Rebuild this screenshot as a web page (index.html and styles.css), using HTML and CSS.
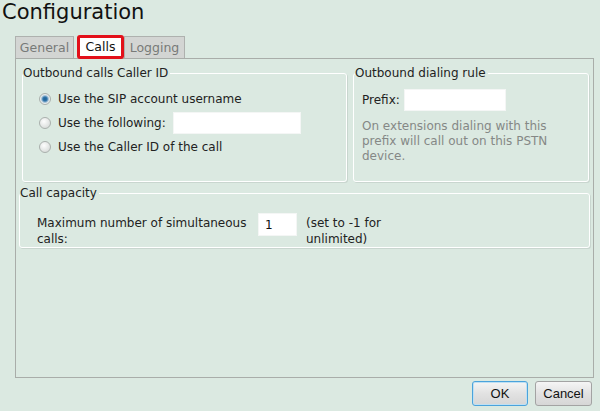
FILE: index.html
```html
<!DOCTYPE html>
<html lang="en">
<head>
    <meta charset="UTF-8">
    <meta name="viewport" content="width=device-width, initial-scale=1.0">
    <title>Configuration</title>
    <link rel="stylesheet" href="styles.css">
</head>
<body>
    <h1 class="title">Configuration</h1>

    <div class="tabs">
        <span class="tab tab-general">General</span>
        <span class="tab tab-active">Calls</span>
        <span class="tab tab-logging">Logging</span>
    </div>

    <div class="panel">
        <div class="panel-row">
            <fieldset class="group group-callerid">
                <legend>Outbound calls Caller ID</legend>
                <div class="group-body callerid-body">
                    <label class="option"><input type="radio" class="radio" name="cid" checked><span>Use the SIP account username</span></label>
                    <label class="option"><input type="radio" class="radio" name="cid"><span>Use the following:</span><input type="text" class="field field-cid"></label>
                    <label class="option"><input type="radio" class="radio" name="cid"><span>Use the Caller ID of the call</span></label>
                </div>
            </fieldset>

            <fieldset class="group group-dial">
                <legend>Outbound dialing rule</legend>
                <div class="group-body dial-body">
                    <div class="prefix-row">
                        <span>Prefix:</span>
                        <input type="text" class="field field-prefix">
                    </div>
                    <p class="hint">On extensions dialing with this prefix will call out on this PSTN device.</p>
                </div>
            </fieldset>
        </div>

        <fieldset class="group group-capacity">
            <legend>Call capacity</legend>
            <div class="group-body capacity-body">
                <span class="capacity-label">Maximum number of simultaneous calls:</span>
                <input type="text" class="field field-capacity" value="1">
                <span class="capacity-note">(set to -1 for unlimited)</span>
            </div>
        </fieldset>
    </div>

    <div class="buttons">
        <button class="btn btn-default">OK</button>
        <button class="btn">Cancel</button>
    </div>
</body>
</html>
```

FILE: styles.css
```css
body {
    font-family: 'DejaVu Sans', Verdana, sans-serif;
    font-size: 12px;
    margin: 0;
    padding: 0;
    background-color: #dbe9e1;
    color: #222;
}
.title {
    margin: 0;
    padding-left: 2px;
    font-size: 21px;
    font-weight: normal;
    line-height: 25px;
    color: #111;
}
.tabs {
    display: flex;
    align-items: flex-end;
    margin-top: 10px;
    padding-left: 15px;
    font-size: 12.5px;
}
.tab {
    box-sizing: border-box;
    height: 22px;
    line-height: 21px;
    text-align: center;
    background: #d3d5d3;
    border: 1px solid #aeb1ae;
    border-bottom: 0;
    color: #787a78;
}
.tab-general {
    width: 59px;
}
.tab-logging {
    width: 61px;
}
.tab-active {
    position: relative;
    width: 47px;
    height: 24px;
    line-height: 18px;
    margin: 0 0 -1px 3px;
    background: #fff;
    border: 3px solid #e3101a;
    border-radius: 3px;
    color: #111;
}
.tab-logging {
    margin-left: 0;
}
.panel {
    box-sizing: border-box;
    height: 320px;
    margin-left: 15px;
    width: 579px;
    padding: 7px 4px 0 6px;
    border: 1px solid #a9ada9;
    background: #dbe9e1;
}
.panel-row {
    display: flex;
    gap: 6px;
}
.group {
    margin: 0;
    padding: 0;
    min-width: 0;
    border: 1px solid #fff;
    border-radius: 3px;
    box-shadow: 1px 1px 0 #c9d6cf;
}
.group legend {
    padding: 0 2px 0 0;
    line-height: 15px;
    color: #222;
}
.group-callerid {
    box-sizing: border-box;
    width: 325px;
}
.group-dial {
    flex: 1;
}
.group-dial legend {
    margin-left: 1px;
}
.callerid-body {
    padding: 6px 0 0 16px;
}
.option {
    display: flex;
    align-items: center;
    gap: 7px;
    height: 24px;
}
.radio {
    appearance: none;
    -webkit-appearance: none;
    box-sizing: border-box;
    width: 12px;
    height: 12px;
    margin: 0;
    border: 1px solid #aab0ad;
    border-radius: 50%;
    background: radial-gradient(circle at 40% 35%, #fdfdfd, #cfd4d1);
}
.radio:checked {
    background: radial-gradient(circle, #1f5f93 0, #2f74aa 2px, #a9c4d8 3.5px, #e9eeee 4.5px, #cdd3d0 100%);
}
.field {
    box-sizing: border-box;
    height: 22px;
    margin: 0;
    padding: 0 6px;
    border: 1px solid #f4f6f5;
    background: #fff;
    font: inherit;
    color: #111;
    outline: none;
}
.field-cid {
    width: 128px;
}
.dial-body {
    padding: 8px 15px 17px 8px;
}
.prefix-row {
    display: flex;
    align-items: center;
    gap: 4px;
}
.field-prefix {
    width: 102px;
}
.hint {
    margin: 8px 0 0;
    line-height: 15px;
    color: #858886;
}
.group-capacity {
    margin: 4px -1px 0 -3px;
}
.capacity-body {
    display: flex;
    align-items: flex-start;
    padding: 12px 0 0 17px;
}
.capacity-label,
.capacity-note {
    margin-top: 2px;
    line-height: 16px;
}
.capacity-label {
    width: 213px;
}
.field-capacity {
    width: 39px;
    height: 23px;
    margin-left: 8px;
}
.capacity-note {
    width: 110px;
    margin-left: 9px;
}
.buttons {
    display: flex;
    justify-content: flex-end;
    gap: 7px;
    padding: 3px 8px 0 0;
}
.btn {
    box-sizing: border-box;
    height: 25px;
    padding: 0;
    font-family: 'Liberation Sans', Arial, sans-serif;
    font-size: 13px;
    color: #111;
    background: linear-gradient(#f5f5f5, #e2e2e2 50%, #d6d6d6);
    border: 1px solid #a3a3a3;
    border-radius: 3px;
}
.btn-default {
    width: 56px;
    border-color: #4ba3dc;
    box-shadow: inset 0 0 0 1px #bfe0f3;
}
.btn:last-child {
    width: 57px;
}
```
